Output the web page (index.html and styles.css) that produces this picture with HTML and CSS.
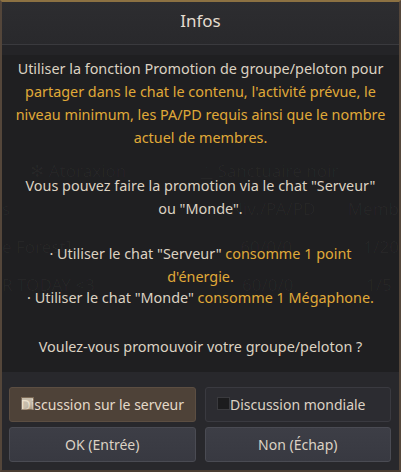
FILE: index.html
```html
<!DOCTYPE html>
<html lang="fr">
<head>
  <meta charset="UTF-8" />
  <meta name="viewport" content="width=device-width, initial-scale=1.0">
  <title>Infos</title>
  <link rel="stylesheet" href="styles.css">
</head>
<body>
  <div class="dialog">
    <div class="head">Infos</div>

    <div class="body">
      <!-- la liste derrière la fenêtre, à peine visible -->
      <div class="ghost" aria-hidden="true">
        <div class="ghost-row">
          <span class="g-name first">&#10043; Atoraxion</span>
          <span class="g-name">&#9651; Sanctuaire noir</span>
        </div>
        <div class="ghost-row">
          <span class="g-a">s</span>
          <span class="g-b">Niv./PA/PD</span>
          <span class="g-c">Memb</span>
        </div>
        <div class="ghost-row">
          <span class="g-a">e Forest]</span>
          <span class="g-b">60/0/0</span>
          <span class="g-c">1/20</span>
        </div>
        <div class="ghost-row">
          <span class="g-a">R TODAY &lt;3</span>
          <span class="g-b">60/0/0</span>
          <span class="g-c">1/5</span>
        </div>
      </div>

      <div class="msg">
        <p class="p1">Utiliser la fonction Promotion de groupe/peloton pour<br>
          <span class="gold">partager dans le chat le contenu, l'activité prévue, le<br>
          niveau minimum, les PA/PD requis ainsi que le nombre<br>
          actuel de membres.</span></p>
        <p class="p2">Vous pouvez faire la promotion via le chat "Serveur"<br>ou "Monde".</p>
        <p class="p3">· Utiliser le chat "Serveur" <span class="gold">consomme 1 point<br>d'énergie.</span></p>
        <p class="p4">· Utiliser le chat "Monde" <span class="gold">consomme 1 Mégaphone.</span></p>
        <p class="p5">Voulez-vous promouvoir votre groupe/peloton ?</p>
      </div>
    </div>

    <div class="foot">
      <button class="btn choice selected"><span class="check"></span>Discussion sur le serveur</button>
      <button class="btn choice"><span class="check"></span>Discussion mondiale</button>
      <button class="btn action">OK (Entrée)</button>
      <button class="btn action">Non (Échap)</button>
    </div>
  </div>
</body>
</html>
```

FILE: styles.css
```css
body {
  margin: 0;
  background: #1e1e20;
  font-family: "Noto Sans", "DejaVu Sans", sans-serif;
}

.dialog {
  width: 401px;
  height: 472px;
  box-sizing: border-box;
  border: 2px solid #54463a;
  border-top-color: #8c7142;
  border-bottom-color: #4a3d33;
  display: flex;
  flex-direction: column;
  background: #1f1f21;
  overflow: hidden;
}

.head {
  height: 42px;
  line-height: 38px;
  text-align: center;
  font-size: 17px;
  color: #e4dccf;
  background: linear-gradient(#2d2d30, #29292c);
  border-bottom: 1px solid #3a3a3e;
  flex: none;
}

.body {
  height: 327px;
  flex: none;
  display: grid;
  background: linear-gradient(#242427 0, #242427 10px, #1f1f21 10px);
}

.ghost, .msg {
  grid-area: 1 / 1;
}

.ghost {
  padding-top: 107px;
  font-size: 17px;
  color: rgba(255, 255, 255, 0.03);
  white-space: nowrap;
  overflow: hidden;
}

.ghost-row {
  display: flex;
  height: 38px;
  line-height: 38px;
}

.g-name {
  width: 170px;
}

.g-name.first {
  padding-left: 28px;
}

.g-a {
  width: 240px;
}

.g-b {
  width: 124px;
}

.msg {
  padding-top: 12px;
  text-align: center;
  font-size: 14.4px;
  line-height: 23px;
  color: #dcd2c2;
}

.msg p {
  margin: 0;
}

.msg .p2 {
  margin-top: 25px;
}

.msg .p3 {
  margin-top: 22px;
}

.msg .p4 {
  line-height: 20px;
}

.msg .p5 {
  margin-top: 27px;
}

.gold {
  color: #e0aa38;
}

.foot {
  flex: 1;
  background: #28282c;
  padding: 15px 8px 0 7px;
  display: grid;
  grid-template-columns: 1fr 1fr;
  grid-auto-rows: 35px;
  gap: 5px 9px;
  align-content: start;
}

.btn {
  position: relative;
  font-family: inherit;
  font-size: 14px;
  color: #dcd2c4;
  border-radius: 3px;
  border: 1px solid #3a3a40;
  background: #2c2c31;
  padding: 0;
  cursor: pointer;
}

.btn.selected {
  background: #4e4238;
  border-color: #5c4e42;
  color: #e4d9c8;
}

.btn.action {
  background: linear-gradient(#3d3e46, #383941);
  border-color: #4a4b53;
}

.check {
  position: absolute;
  left: 11px;
  top: 9px;
  width: 11px;
  height: 11px;
  background: #1c1c1e;
  border: 1px solid #3a3a3e;
}

.selected .check {
  background: linear-gradient(135deg, #f0e6d2 55%, #bfae94);
  border-color: #8a7660;
  opacity: 0.75;
}
```
